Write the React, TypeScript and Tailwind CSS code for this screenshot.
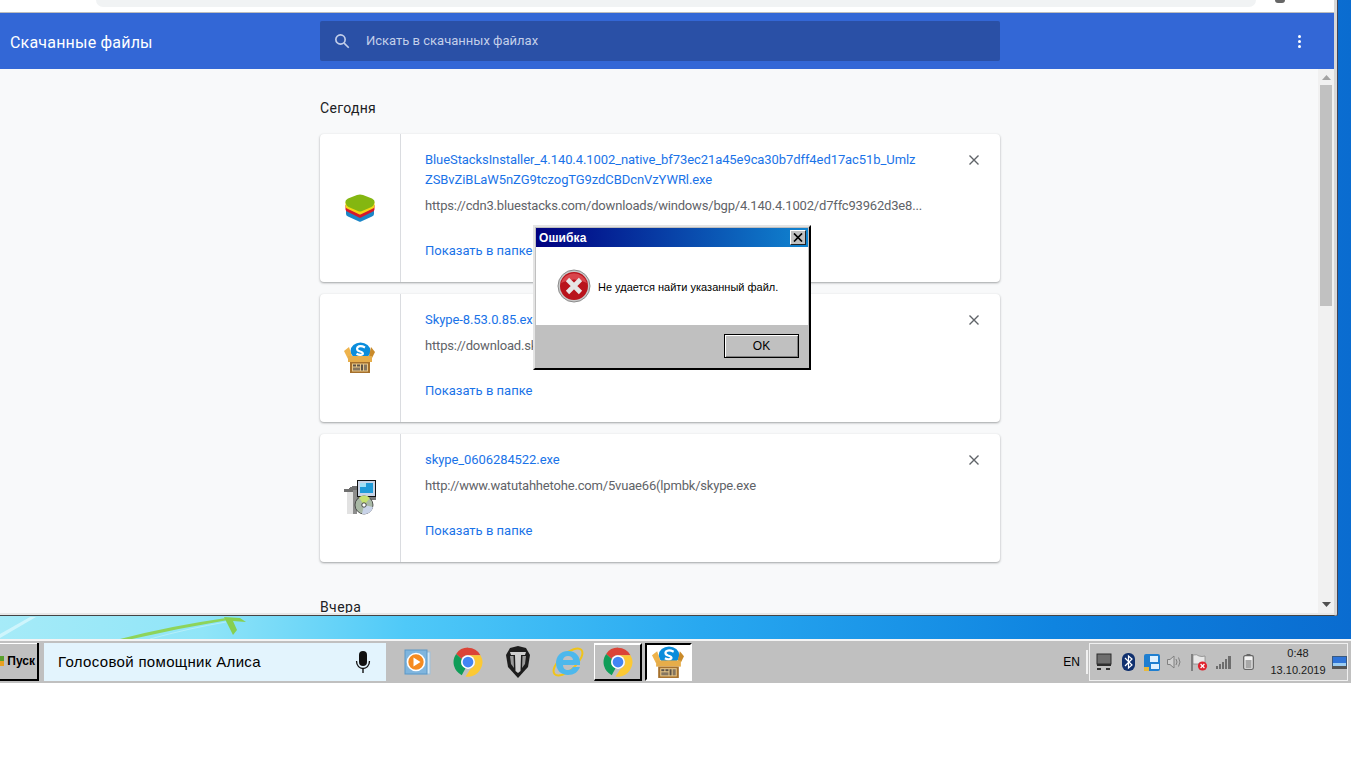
import React from "react";

const ChromeIcon = ({ size = 30 }: { size?: number }) => (
  <svg width={size} height={size} viewBox="0 0 48 48">
    <path d="M24 1 A23 23 0 0 1 44 13 L24 13 A11 11 0 0 0 14 19 L5 11 A23 23 0 0 1 24 1 Z" fill="#db4437" />
    <path d="M5 11 L14 19 A11 11 0 0 0 20 34 L14 45 A23 23 0 0 1 5 11 Z" fill="#0f9d58" />
    <path d="M44 13 A23 23 0 0 1 20 47 L28 35 A11 11 0 0 0 34 19 L24 13 Z" fill="#fcc934" />
    <circle cx="24" cy="24" r="11" fill="#fff" />
    <circle cx="24" cy="24" r="8.6" fill="#4285f4" />
  </svg>
);

const BlueStacks = () => (
  <svg width="30" height="28" viewBox="0 0 30 28">
    <path d="M1 14 L15 21 L29 14 L29 20 Q29 21.5 27 22.5 L16 27.6 Q15 28 14 27.6 L3 22.5 Q1 21.5 1 20 Z" fill="#1b86c8" />
    <path d="M0.5 11 L15 18 L29.5 11 L29.5 15.5 Q29.5 17 27 18 L16 23.6 Q15 24 14 23.6 L3 18 Q0.5 17 0.5 15.5 Z" fill="#d6182b" />
    <path d="M0.5 8 L15 15 L29.5 8 L29.5 12.5 Q29.5 14 27 15 L16 20.2 Q15 20.6 14 20.2 L3 15 Q0.5 14 0.5 12.5 Z" fill="#f4d816" />
    <path d="M12 1 Q15 0 18 1 L27 4.5 Q30 6 29.6 8 L29 10 Q28.6 12 26.5 13 L16.5 17.3 Q15 17.8 13.5 17.3 L3.5 13 Q1.4 12 1 10 L0.4 8 Q0 6 3 4.5 Z" fill="#84b711" />
  </svg>
);

const SkypeBox = ({ size = 32 }: { size?: number }) => (
  <svg width={size} height={size} viewBox="0 0 32 32">
    <ellipse cx="16.5" cy="9" rx="10" ry="8.6" fill="#0a8ddc" />
    <path d="M21 5.5 Q16 3 13.5 5.4 Q12 8 15.5 9.2 Q19.5 10.4 18.8 12 Q16.5 14 12.5 11.8" fill="none" stroke="#fff" strokeWidth="2.2" />
    <path d="M0 9 L5 5 L8 14 L4 17 Z" fill="#eeb34c" />
    <path d="M31 10 L27 5 L25 14 L28 16 Z" fill="#c98a2a" />
    <path d="M4 14 L28 14 L28 20 L4 20 Z" fill="#e6ad4a" />
    <rect x="6" y="20" width="20" height="11" fill="#a5702c" />
    <rect x="8" y="21.5" width="16" height="8" fill="#e9c88a" />
    <rect x="9" y="22.5" width="3" height="2" fill="#5c5247" />
    <rect x="13" y="22.5" width="3" height="2" fill="#5c5247" />
    <rect x="17" y="22.5" width="2" height="6" fill="#5c5247" />
    <rect x="20" y="22.5" width="3" height="6" fill="#867660" />
    <rect x="9" y="25.5" width="7" height="3" fill="#867660" />
  </svg>
);

const Installer = () => (
  <svg width="32" height="36" viewBox="0 0 32 36" shapeRendering="crispEdges">
    <path d="M0 9 L4 9 L9 6 L13 6 L13 34 L3 34 L3 12 L0 12 Z" fill="#6f6f6f" />
    <rect x="3" y="12" width="6" height="22" fill="#e2e2e2" />
    <rect x="9" y="10" width="4" height="24" fill="#8d8d8d" />
    <rect x="13" y="0" width="19" height="17" fill="#111" />
    <rect x="14" y="1" width="17" height="15" fill="#c8d4e6" />
    <rect x="16" y="3" width="13" height="10" fill="#1f9bd8" />
    <rect x="16" y="3" width="6" height="4" fill="#9fe0f5" />
    <rect x="13" y="17" width="19" height="3" fill="#777" />
    <circle cx="20" cy="25" r="9" fill="#a9b9a6" stroke="#333" strokeWidth="0.8" shapeRendering="auto" />
    <path d="M20 25 L15 17.5 A9 9 0 0 1 26 18 Z" fill="#c4e070" shapeRendering="auto" />
    <path d="M20 25 L29 27 A9 9 0 0 1 18 34 Z" fill="#c9d3e8" shapeRendering="auto" />
    <circle cx="20" cy="25" r="2.2" fill="#fff" stroke="#222" strokeWidth="0.8" shapeRendering="auto" />
  </svg>
);

const CloseX = () => (
  <svg width="10" height="10" viewBox="0 0 10 10">
    <path d="M0.5 0.5 L9.5 9.5 M9.5 0.5 L0.5 9.5" stroke="#5f6368" strokeWidth="1.4" fill="none" />
  </svg>
);

const Card = ({
  h,
  icon,
  title,
  url,
}: {
  h: string;
  icon: React.ReactNode;
  title: React.ReactNode;
  url: string;
}) => (
  <div className={`flex ${h} w-[680px] shrink-0 rounded bg-white shadow-[0_1px_2px_rgba(60,64,67,0.35),0_1px_3px_rgba(60,64,67,0.15)]`}>
    <div className="flex w-[81px] shrink-0 items-center justify-center border-r border-[#dadce0]">{icon}</div>
    <div className="relative flex min-w-0 flex-1 flex-col pl-6 pt-4 text-[13px]">
      <div className="tracking-[-0.08px] text-[#1a73e8] leading-5">{title}</div>
      <div className="mt-[6px] h-5 overflow-hidden whitespace-nowrap leading-5 tracking-[-0.18px] text-[#5f6368]">{url}</div>
      <div className="mt-[25px] leading-5 text-[#1a73e8]">Показать в папке</div>
      <div className="absolute right-[21px] top-[21px]">
        <CloseX />
      </div>
    </div>
  </div>
);

const TaskSlot = ({ children, cls }: { children: React.ReactNode; cls: string }) => (
  <div className={`flex h-[38px] shrink-0 items-center justify-center ${cls}`}>{children}</div>
);

export default function App() {
  return (
    <div className="h-[768px] w-[1366px] overflow-hidden bg-white font-['Roboto',sans-serif]">
      <div className="w-[1351px]">
        {/* desktop with browser window */}
        <div className="relative h-[639px] bg-[linear-gradient(90deg,#a6ebf8_0%,#90e5f8_15%,#4fc9f8_30%,#28a8f0_52%,#0f84e0_78%,#0a6cd0_100%)]">
          <div className="relative z-10 flex h-[616px] w-[1337px] flex-col rounded-br-[2px] border-b border-r-[3px] border-b-[#444] border-r-[#d8d8d8] bg-white shadow-[1px_0_0_#445]">
            <div className="flex h-[13px] shrink-0 border-b border-[#bdbdbd] bg-white">
              <div className="ml-[96px] h-[7px] w-[1160px] rounded-b-[10px] bg-[#f1f3f4]" />
              <div className="ml-[19px] h-[3px] w-[10px] rounded-b-full bg-[#666]" />
            </div>
            <div className="flex h-[56px] shrink-0 items-center bg-[#3367d6]">
              <div className="w-[320px] pl-[10px] pt-[3px] text-[16px] tracking-[0.2px] text-white">Скачанные файлы</div>
              <div className="flex h-10 w-[680px] items-center rounded-[2px] bg-[#2a50a6] pl-[13px]">
                <svg width="18" height="18" viewBox="0 0 24 24" fill="none" stroke="#c3cfea" strokeWidth="2.2">
                  <circle cx="10" cy="10" r="6.2" />
                  <path d="M14.8 14.8 L21 21" />
                </svg>
                <span className="ml-[15px] text-[13px] text-[#c3cfea]">Искать в скачанных файлах</span>
              </div>
              <div className="ml-[298px] flex flex-col gap-[2px]">
                <span className="h-[3px] w-[3px] rounded-full bg-white" />
                <span className="h-[3px] w-[3px] rounded-full bg-white" />
                <span className="h-[3px] w-[3px] rounded-full bg-white" />
              </div>
            </div>
            <div className="flex min-h-0 flex-1 bg-[#e8e8e8] pb-[2px]">
              <div className="flex min-w-0 flex-1 overflow-hidden bg-[#f8f9fa] pl-[320px]">
                <div className="flex flex-col gap-3">
                  <div className="mb-[4px] shrink-0 pt-[29px] text-[14px] leading-5 tracking-[0.3px] text-[#202124]">Сегодня</div>
                  <Card
                    h="h-[148px]"
                    icon={<BlueStacks />}
                    title={
                      <>
                        BlueStacksInstaller_4.140.4.1002_native_bf73ec21a45e9ca30b7dff4ed17ac51b_Umlz
                        <br />
                        ZSBvZiBLaW5nZG9tczogTG9zdCBDcnVzYWRl.exe
                      </>
                    }
                    url="https://cdn3.bluestacks.com/downloads/windows/bgp/4.140.4.1002/d7ffc93962d3e8..."
                  />
                  <Card h="h-[128px]" icon={<SkypeBox />} title="Skype-8.53.0.85.exe" url="https://download.skype.com/s4l/download/win" />
                  <Card h="h-[128px]" icon={<Installer />} title="skype_0606284522.exe" url="http://www.watutahhetohe.com/5vuae66(lpmbk/skype.exe" />
                  <div className="mt-[23px] shrink-0 text-[14px] leading-5 tracking-[0.4px] text-[#202124]">Вчера</div>
                </div>
              </div>
              <div className="flex w-[16px] shrink-0 flex-col items-center bg-[#f1f1f1]">
                <svg className="mt-[6px]" width="9" height="5" viewBox="0 0 9 5"><path d="M4.5 0 L9 5 L0 5 Z" fill="#a3a3a3" /></svg>
                <div className="mt-[5px] h-[221px] w-[12px] bg-[#c1c1c1]" />
                <div className="flex-1" />
                <svg className="mb-[6px]" width="9" height="5" viewBox="0 0 9 5"><path d="M0 0 L9 0 L4.5 5 Z" fill="#505050" /></svg>
              </div>
            </div>
          </div>
          <svg className="absolute bottom-0 left-0" width="300" height="23" viewBox="0 0 300 23">
            <path d="M120 23 Q170 10 226 2 L228 4 Q180 12 132 23 Z" fill="#8ed45a" />
            <path d="M224 1 L233 19 L237 14 L233 5 L246 6 L240 2 Z" fill="#86cf50" />
            <path d="M0 22 L36 1 L30 1 L0 18 Z" fill="#d8f7fc" opacity="0.8" />
            <path d="M150 23 Q190 12 226 6" fill="none" stroke="#d8f7fc" opacity="0.5" />
          </svg>
        </div>

        {/* taskbar */}
        <div className="h-[2px] bg-[#f4f4f4]" />
        <div className="flex h-[42px] items-center bg-[#c0c0c0] font-['Liberation_Sans',sans-serif]">
          <div className="flex h-[38px] w-[39px] shrink-0 items-center justify-between border-b-2 border-r-2 border-b-black border-r-black pr-[2px] text-[12px] font-bold text-black shadow-[inset_0_1px_0_#fff]">
            <svg width="5" height="10" viewBox="0 0 5 10">
              <rect x="0" y="0" width="4" height="5" fill="#5aa02c" />
              <rect x="0" y="5" width="4" height="5" fill="#e8a020" />
            </svg>
            <span>Пуск</span>
          </div>
          <div className="ml-[5px] flex h-[38px] w-[342px] shrink-0 items-center justify-between bg-[#e3f4fd] pl-[14px] pr-[15px] text-[15px] tracking-[0.33px] text-black">
            <span>Голосовой помощник Алиса</span>
            <svg width="16" height="22" viewBox="0 0 16 22">
              <rect x="4" y="0" width="8" height="15" rx="4" fill="#111" />
              <path d="M1.5 10 C1.5 20 14.5 20 14.5 10" fill="none" stroke="#111" strokeWidth="1.3" />
              <rect x="7.3" y="17" width="1.4" height="5" fill="#111" />
            </svg>
          </div>
          <TaskSlot cls="ml-[7px] w-[50px]">
            <svg width="28" height="28" viewBox="0 0 28 28">
              <rect x="4" y="4" width="22" height="22" fill="#d4e6f3" stroke="#9cc0dc" />
              <rect x="1" y="2" width="22" height="24" fill="#7fb5de" stroke="#5c97c6" />
              <circle cx="12" cy="14" r="8.5" fill="#f58a1f" stroke="#fff" strokeWidth="1.6" />
              <path d="M9.5 9.5 L16.5 14 L9.5 18.5 Z" fill="#fff" />
            </svg>
          </TaskSlot>
          <TaskSlot cls="w-[50px]"><ChromeIcon /></TaskSlot>
          <TaskSlot cls="w-[50px]">
            <svg width="24" height="32" viewBox="0 0 24 32">
              <path d="M12 0 L20 2 L24 9 L22 21 L12 32 L2 21 L0 9 L4 2 Z" fill="#1d1d1d" />
              <path d="M4 6 L20 6 L19 9 L15 9 L14.5 25 L12 27 L9.5 25 L9 9 L5 9 Z" fill="#cfcfcf" />
              <path d="M4 10 L7.5 10 L8 22 L5 18 Z M20 10 L16.5 10 L16 22 L19 18 Z" fill="#9a9a9a" />
            </svg>
          </TaskSlot>
          <TaskSlot cls="w-[50px]">
            <svg width="32" height="32" viewBox="0 0 32 32">
              <ellipse cx="16" cy="16" rx="18" ry="8" transform="rotate(-42 16 16)" fill="none" stroke="#f0c419" strokeWidth="2" />
              <path d="M16 5 C8 5 4 11 4 17 C4 24 9 29 16 29 C22 29 26 26 28 21 L21 21 C20 23 18 24 16 24 C13 24 11 22 11 19 L28 19 C29 11 24 5 16 5 Z M11 14 C11 12 13 10 16 10 C19 10 21 12 21 14 Z" fill="#4db8ec" fillRule="evenodd" />
            </svg>
          </TaskSlot>
          <TaskSlot cls="mx-[1px] w-[48px] border-b-2 border-r-2 border-l border-t-2 border-b-black border-r-black border-l-white border-t-white">
            <ChromeIcon />
          </TaskSlot>
          <TaskSlot cls="ml-[2px] w-[47px] border-2 border-b-white border-r-white border-l-black border-t-black bg-white">
            <SkypeBox size={33} />
          </TaskSlot>
          <div className="ml-auto mr-[3px] flex items-center">
            <span className="text-[12px] text-black">EN</span>
            <div className="ml-[6px] h-[24px] w-[2px] bg-[#f0f0f0]" />
            <div className="ml-[1px] flex h-[38px] w-[259px] items-center border border-[#f0f0f0] pl-[2px]">
              <div className="flex w-[24px] justify-center">
                <svg width="16" height="18" viewBox="0 0 16 18">
                  <rect x="1" y="1" width="14" height="10" fill="#6e6e6e" stroke="#2d2d2d" />
                  <rect x="1" y="11" width="14" height="2" fill="#2d2d2d" />
                  <path d="M1 16 H5 M10 16 H14" stroke="#333" strokeWidth="2" />
                </svg>
              </div>
              <div className="flex w-[24px] justify-center">
                <svg width="13" height="18" viewBox="0 0 13 18">
                  <rect x="0" y="0" width="13" height="18" rx="6" fill="#10306e" />
                  <path d="M3 5 L10 12 L6.5 15 L6.5 3 L10 6 L3 13" fill="none" stroke="#fff" strokeWidth="1.2" />
                </svg>
              </div>
              <div className="flex w-[23px] justify-center">
                <svg width="16" height="17" viewBox="0 0 16 17">
                  <rect x="0" y="0" width="16" height="17" rx="2" fill="#1f7fd0" />
                  <rect x="6" y="2" width="8" height="6" fill="#dff1ff" />
                  <rect x="7" y="10" width="8" height="5" fill="#dff1ff" />
                  <rect x="0" y="13" width="5" height="4" fill="#e8b93c" />
                </svg>
              </div>
              <div className="flex w-[24px] justify-center">
                <svg width="16" height="14" viewBox="0 0 16 14" fill="none">
                  <path d="M0.5 4.5 H3 L7 1 V13 L3 9.5 H0.5 Z" fill="#d0d0d0" stroke="#808080" />
                  <path d="M9 4 Q11 7 9 10 M11.5 2.5 Q14.5 7 11.5 11.5" stroke="#808080" />
                </svg>
              </div>
              <div className="flex w-[25px] justify-center">
                <svg width="17" height="17" viewBox="0 0 17 17">
                  <path d="M1 0 V17" stroke="#555" strokeWidth="1.2" />
                  <path d="M2 1 Q6 0 8 2 Q11 3 14 2 V9 H8 V10 H2 Z" fill="#e8e8e8" stroke="#808080" strokeWidth="0.7" />
                  <circle cx="11.5" cy="12" r="4.6" fill="#e0232e" />
                  <path d="M9.6 10 L13.4 14 M13.4 10 L9.6 14" stroke="#fff" strokeWidth="1.2" />
                </svg>
              </div>
              <div className="flex w-[24px] justify-center">
                <svg width="16" height="13" viewBox="0 0 16 13" fill="#6e6e6e">
                  <rect x="0" y="10" width="2" height="3" />
                  <rect x="3" y="8" width="2" height="5" />
                  <rect x="6" y="6" width="2" height="7" />
                  <rect x="9" y="3" width="2" height="10" />
                  <rect x="12" y="0" width="3" height="13" />
                </svg>
              </div>
              <div className="flex w-[24px] justify-center">
                <svg width="11" height="16" viewBox="0 0 11 16">
                  <rect x="3.5" y="0" width="4" height="2" fill="#666" />
                  <rect x="0.7" y="1.7" width="9.6" height="13.6" rx="1.5" fill="#f4f4f4" stroke="#666" strokeWidth="1.3" />
                  <rect x="2.5" y="6" width="6" height="8" fill="#a8a8a8" />
                </svg>
              </div>
              <div className="ml-[9px] flex w-[58px] flex-col items-center text-[11px] leading-[17px] text-[#1a1a1a]">
                <span>0:48</span>
                <span>13.10.2019</span>
              </div>
              <svg className="ml-[5px]" width="15" height="13" viewBox="0 0 15 13">
                <rect x="0" y="0" width="15" height="13" fill="#3a5a80" />
                <rect x="1" y="1" width="13" height="7" fill="#2f74d8" />
                <rect x="1" y="7" width="13" height="3" fill="#9ccdf2" />
                <rect x="0" y="10" width="15" height="3" fill="#555" />
              </svg>
            </div>
          </div>
        </div>
      </div>

      {/* error dialog */}
      <div className="absolute left-[533px] top-[225px] z-20 flex h-[145px] w-[278px] flex-col border-2 border-b-black border-l-[#e4e4e4] border-r-black border-t-[#e4e4e4] bg-[#c0c0c0] p-px font-['Liberation_Sans',sans-serif]">
        <div className="flex h-[19px] shrink-0 items-center justify-between bg-[linear-gradient(90deg,#000080,#1084d0)] pl-[3px] pr-[2px]">
          <span className="text-[12px] font-bold tracking-[0.1px] text-white">Ошибка</span>
          <div className="flex h-[15px] w-[16px] items-center justify-center border border-b-[#222] border-l-white border-r-[#222] border-t-white bg-[#c0c0c0]">
            <svg width="10" height="9" viewBox="0 0 10 9"><path d="M1 0.5 L9 8.5 M9 0.5 L1 8.5" stroke="#000" strokeWidth="1.7" /></svg>
          </div>
        </div>
        <div className="flex h-[78px] shrink-0 items-center bg-white pl-[21px]">
          <svg width="34" height="34" viewBox="0 0 34 34">
            <circle cx="17" cy="17" r="16" fill="#c9c9c9" stroke="#8c8c8c" />
            <circle cx="17" cy="17" r="14" fill="#b9141c" />
            <path d="M4 14 A13.5 13.5 0 0 1 30 14 Q17 7 4 14 Z" fill="#d9454c" />
            <path d="M10.5 10.5 L23.5 23.5 M23.5 10.5 L10.5 23.5" stroke="#e6e6e6" strokeWidth="4.6" />
          </svg>
          <span className="ml-[7px] pt-[2px] text-[11px] text-black">Не удается найти указанный файл.</span>
        </div>
        <div className="flex flex-1 items-center justify-end pr-[9px]">
          <div className="flex h-[24px] w-[75px] items-center justify-center border border-black text-[12px] text-black shadow-[inset_1px_1px_0_#fff,inset_-1px_-1px_0_#808080]">
            OK
          </div>
        </div>
      </div>
    </div>
  );
}
